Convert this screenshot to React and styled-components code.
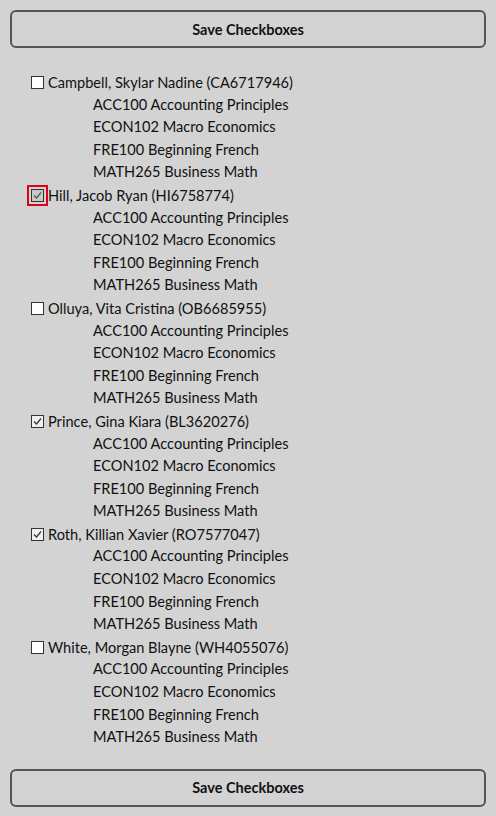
import styled, { createGlobalStyle } from "styled-components";

const students = [
  { name: "Campbell, Skylar Nadine (CA6717946)", checked: false },
  { name: "Hill, Jacob Ryan (HI6758774)", checked: true, focused: true },
  { name: "Olluya, Vita Cristina (OB6685955)", checked: false },
  { name: "Prince, Gina Kiara (BL3620276)", checked: true },
  { name: "Roth, Killian Xavier (RO7577047)", checked: true },
  { name: "White, Morgan Blayne (WH4055076)", checked: false },
];

const courses = [
  "ACC100 Accounting Principles",
  "ECON102 Macro Economics",
  "FRE100 Beginning French",
  "MATH265 Business Math",
];

const GlobalStyle = createGlobalStyle`
  html, body {
    margin: 0;
    background: #d3d3d3;
  }
  body {
    font-family: Lato, "Open Sans", sans-serif;
    color: #111;
  }
`;

const Page = styled.div`
  display: flex;
  flex-direction: column;
  padding: 10px;
`;

const SaveButton = styled.button`
  height: 38px;
  width: 100%;
  border: 2px solid #555;
  border-radius: 6px;
  background: transparent;
  font-family: Lato, sans-serif;
  font-weight: 700;
  font-size: 14.5px;
  color: #111;
`;

const List = styled.div`
  display: flex;
  flex-direction: column;
  margin: 23px 0 20px;
  padding-left: 21px;
`;

const Row = styled.label`
  display: flex;
  align-items: center;
  height: 22.6px;
  font-size: 14.6px;
  gap: 4px;
`;

const Box = styled.span`
  width: 13px;
  height: 13px;
  box-sizing: border-box;
  border: 1px solid #333;
  background: ${({ $focused, $checked }) =>
    $focused ? "#c8c8c8" : $checked ? "#f0f0f0" : "#fff"};
  display: flex;
  align-items: center;
  justify-content: center;
  outline: ${({ $focused }) => ($focused ? "2px solid #e0001b" : "none")};
  outline-offset: 2px;

  svg {
    width: 11px;
    height: 11px;
  }
`;

const Course = styled.div`
  height: 22.6px;
  line-height: 22.6px;
  font-size: 14.6px;
  padding-left: 62px;
`;

const Check = ({ checked, focused }) => (
  <Box $checked={checked} $focused={focused}>
    {checked && (
      <svg viewBox="0 0 11 11">
        <path d="M2 5.5 L4.5 8 L9 2.5" fill="none" stroke={focused ? "#555" : "#333"} strokeWidth="1.2" />
      </svg>
    )}
  </Box>
);

export default function App() {
  return (
    <>
      <GlobalStyle />
      <Page>
        <SaveButton>Save Checkboxes</SaveButton>
        <List>
          {students.map((s) => (
            <div key={s.name}>
              <Row>
                <Check checked={s.checked} focused={s.focused} />
                {s.name}
              </Row>
              {courses.map((c) => (
                <Course key={c}>{c}</Course>
              ))}
            </div>
          ))}
        </List>
        <SaveButton>Save Checkboxes</SaveButton>
      </Page>
    </>
  );
}
